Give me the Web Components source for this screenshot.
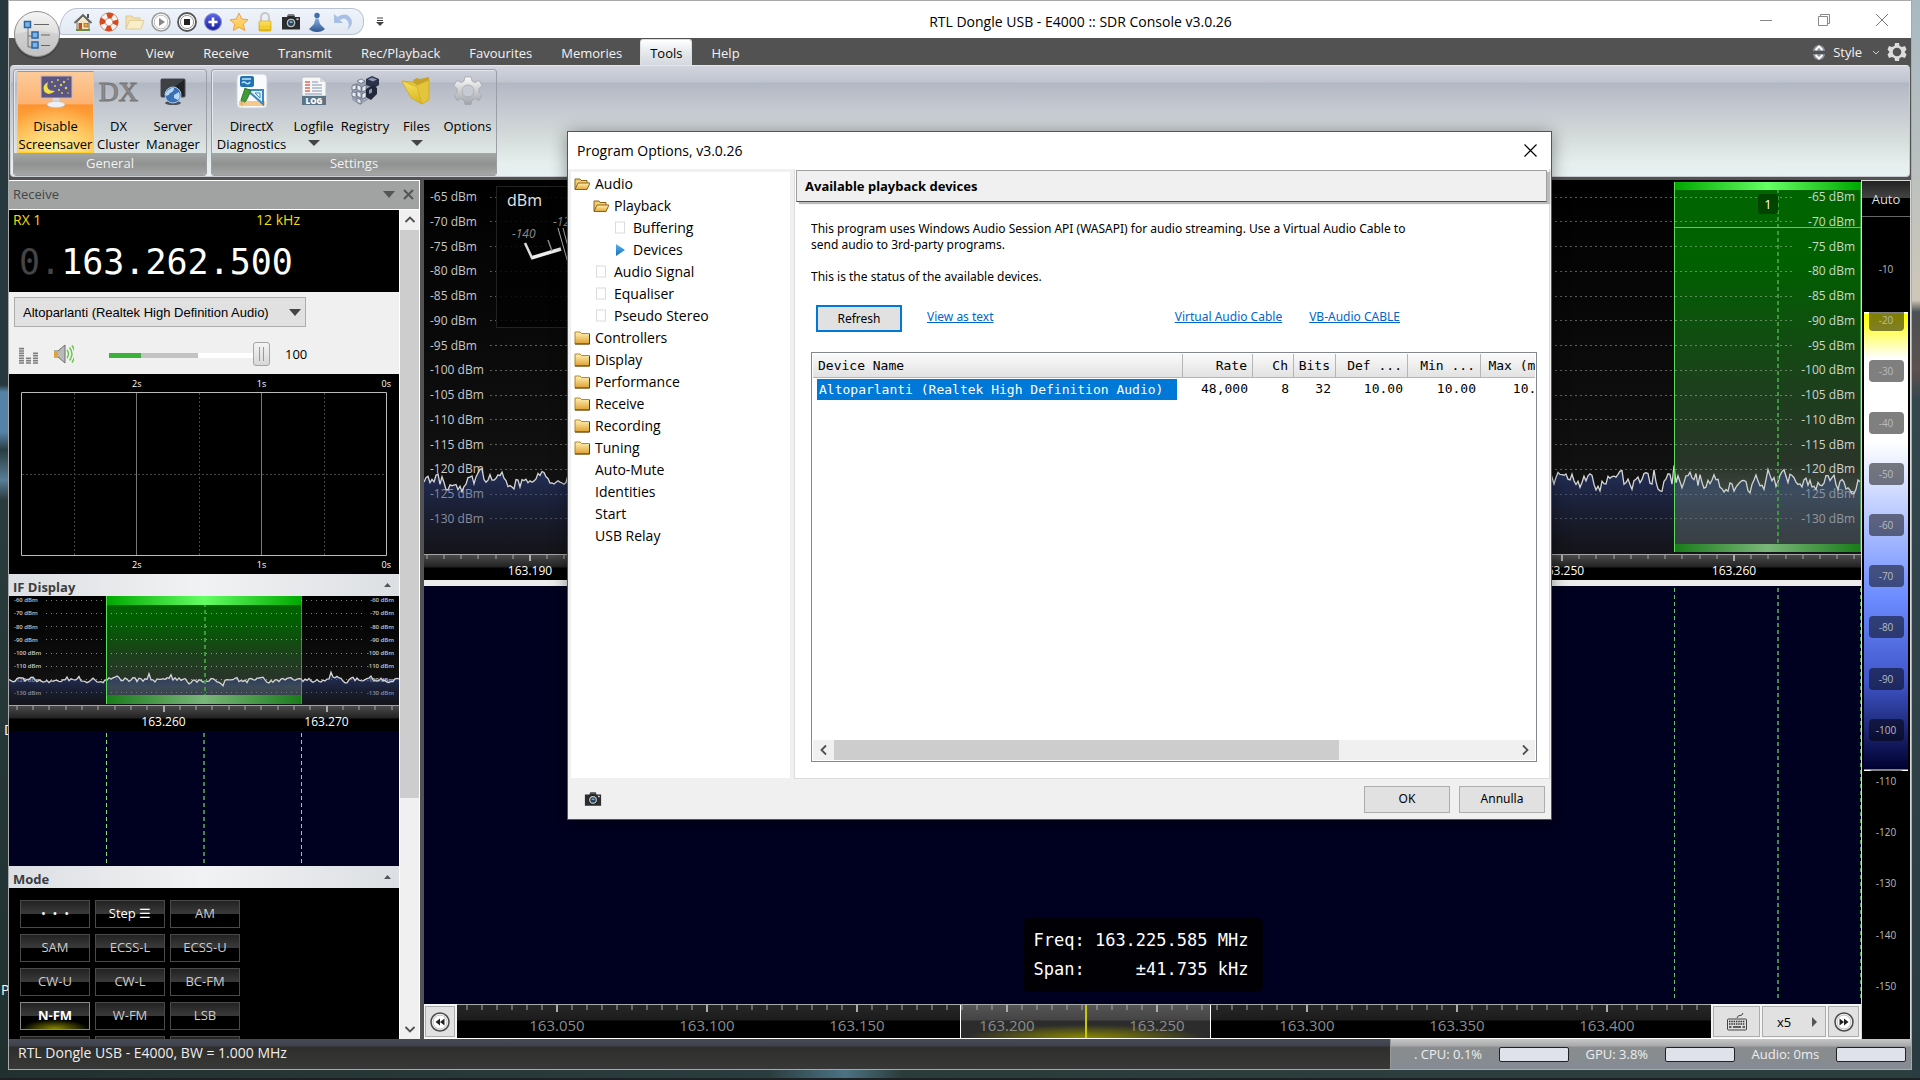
<!DOCTYPE html>
<html lang="en">
<head>
<meta charset="utf-8">
<title>RTL Dongle USB - E4000 :: SDR Console v3.0.26</title>
<style>
html,body{height:100%;margin:0}
body{font-family:"Open Sans","Noto Sans",sans-serif;font-size:13px;line-height:18px;color:#000;overflow:hidden;background:#1f2e30}
</style>
</head>
<body>
<sdr-desktop>
  <sdr-window>
    <title-bar slot="title">RTL Dongle USB - E4000 :: SDR Console v3.0.26</title-bar>
    <ribbon-tabs slot="tabs"></ribbon-tabs>
    <ribbon-body slot="ribbon">
      <ribbon-group caption="General">
        <ribbon-button icon="moon" active style="--w:77px">Disable<br>Screensaver</ribbon-button>
        <ribbon-button icon="dx" style="--w:49px">DX<br>Cluster</ribbon-button>
        <ribbon-button icon="server" style="--w:60px">Server<br>Manager</ribbon-button>
      </ribbon-group>
      <ribbon-group caption="Settings">
        <ribbon-button icon="directx" style="--w:73px">DirectX<br>Diagnostics</ribbon-button>
        <ribbon-button icon="log" menu style="--w:51px">Logfile</ribbon-button>
        <ribbon-button icon="registry" style="--w:52px">Registry</ribbon-button>
        <ribbon-button icon="files" menu style="--w:51px">Files</ribbon-button>
        <ribbon-button icon="gear" style="--w:51px">Options</ribbon-button>
      </ribbon-group>
    </ribbon-body>
    <receive-pane slot="left">
      <rx-frequency></rx-frequency>
      <audio-output></audio-output>
      <level-graph></level-graph>
      <pane-section heading="IF Display">
        <spectrum-plot small max="-60" step="-10" count="8" width="390" height="109" level="84" spread="3"></spectrum-plot>
        <freq-ruler small offset="73" pitch="163" labels="163.260,163.270"></freq-ruler>
        <water-fall small></water-fall>
      </pane-section>
      <pane-section heading="Mode"><mode-pad></mode-pad></pane-section>
    </receive-pane>
    <display-area slot="centre">
      <spectrum-plot slot="plot" max="-65" step="-5" count="14" width="1437" height="374" level="302" spread="9"><signal-meter></signal-meter></spectrum-plot>
      <freq-ruler slot="axis" offset="20" pitch="172" labels="163.190,,,,,,163.250,163.260"></freq-ruler>
      <water-fall slot="fall"></water-fall>
      <zoom-bar slot="zoom"></zoom-bar>
    </display-area>
    <colour-scale slot="right"></colour-scale>
    <status-bar slot="status">RTL Dongle USB - E4000, BW = 1.000 MHz</status-bar>
  </sdr-window>
  <options-dialog></options-dialog>
</sdr-desktop>

<script>
const define = (tag, css, html) => customElements.define(tag, class extends HTMLElement {
  connectedCallback() {
    if (this.shadowRoot) return;
    const t = document.createElement('template');
    t.innerHTML = `<style>*{box-sizing:border-box}:host{box-sizing:border-box}${css}</style>` + (typeof html === 'function' ? html(this) : html);
    this.attachShadow({ mode: 'open' }).append(t.content.cloneNode(true));
  }
});

/* ---------- icons ---------- */
const G = (id, a, b) => `<linearGradient id="${id}" x1="0" y1="0" x2="0" y2="1"><stop offset="0" stop-color="${a}"/><stop offset="1" stop-color="${b}"/></linearGradient>`;
const ICONS = {
  home: `<path d="M4 10v8h12v-8l-6-6z" fill="#f3e6c6" stroke="#777"/><path d="M1.500 11 10 3 18.500 11" fill="none" stroke="#666" stroke-width="1.800"/><path d="M14 2h2v4h-2z" fill="#555"/><rect x="5.500" y="11" width="3.500" height="7" fill="#b4532a"/><rect x="11" y="11.500" width="4" height="3.500" fill="#eda23b" stroke="#7a5b2a" stroke-width=".6"/><path d="M3 17h14v2H3z" fill="#6c8c3f"/>`,
  buoy: `<circle cx="10" cy="10" r="6.500" fill="none" stroke="#f4f4f4" stroke-width="5"/><circle cx="10" cy="10" r="6.500" fill="none" stroke="#d8491b" stroke-width="5.400" stroke-dasharray="5.600 4.610" stroke-dashoffset="2.800"/><circle cx="10" cy="10" r="9.200" fill="none" stroke="#b5542f" stroke-width=".6"/><circle cx="10" cy="10" r="3.800" fill="#fff" stroke="#b5542f" stroke-width=".6"/>`,
  openfolder: `<path d="M1 17V4h6l1.500 2H15v3" fill="#f2e1b0" stroke="#dbc78f"/><path d="M1 17 4.500 8.500H19L16 17z" fill="#f9edca" stroke="#dfcd9a"/>`,
  play: `<circle cx="10" cy="10" r="9" fill="#fff" stroke="#9b9b9b" stroke-width="1.600"/><circle cx="10" cy="10" r="6.800" fill="none" stroke="#bbb"/><path d="M8 6l6 4-6 4z" fill="#888"/>`,
  stop: `<circle cx="10" cy="10" r="9" fill="#fff" stroke="#555" stroke-width="1.800"/><circle cx="10" cy="10" r="6.600" fill="none" stroke="#999"/><rect x="7" y="7" width="6" height="6" fill="#222"/>`,
  plus: `${G('p','#5b68e6','#1a1f9e')}<circle cx="10" cy="10" r="8.500" fill="url(#p)" stroke="#8c93d8"/><path d="M10 5.500v9M5.500 10h9" stroke="#fff" stroke-width="2.600"/>`,
  star: `${G('s','#ffd9a0','#ffc933')}<path d="M10 1l2.700 6 6.300.7-4.700 4.300 1.400 6.500L10 15.200l-5.700 3.300L5.700 12 1 7.700 7.300 7z" fill="url(#s)" stroke="#eda04a" stroke-linejoin="round"/>`,
  lock: `${G('l','#ffe45e','#e5b400')}<path d="M6 9V5a4 4 0 0 1 8 0v4" fill="none" stroke="#c9c9c9" stroke-width="2.200"/><rect x="4" y="9" width="12" height="10" rx="1" fill="url(#l)" stroke="#d2a613" stroke-width=".7"/><path d="M5 13h10M5 16h10" stroke="#f6d95c"/>`,
  camera: `<path d="M7 2.500h6l1 2.500h5v12.500H1V5h5z" fill="#2c2d2f"/><path d="M7 2.500h6l.6 1.500H6.500z" fill="#777"/><circle cx="10" cy="11" r="5" fill="#b9bcbf" stroke="#111"/><circle cx="10" cy="11" r="3" fill="#28445c"/><path d="M8 10a3 3 0 0 1 4 .5L10 11z" fill="#9fc6e0"/><rect x="15.500" y="6.500" width="2" height="1.500" fill="#ddd"/>`,
  person: `${G('q','#86aede','#2c568f')}<circle cx="10" cy="3.500" r="2.700" fill="#3f6fae"/><path d="M8.500 6.500h3L13 12l5 5q-3 3-8 3t-8-3l5-5z" fill="url(#q)"/>`,
  undo: `<path d="M1 2v9h9L7 8.200q4-3.200 7 0 3.500 4 0 10 6.500-5 4.500-10.500C16 1.500 9 1 4.500 5z" fill="#a9c0e6"/>`,
  moon: `<rect x="3" y="3" width="31" height="22" fill="#5b5583" stroke="#c9b8c0"/><path d="M10 9q-3 9 7 9-7 6-11 0-2-6 4-9z" fill="#f1e04a"/><g fill="#d9cf52"><circle cx="14" cy="9" r="1"/><circle cx="20" cy="7" r="1"/><circle cx="26" cy="9" r="1.200"/><circle cx="30" cy="6" r=".8"/><circle cx="23" cy="12" r="1.200"/><circle cx="28" cy="15" r="1.300"/><circle cx="21" cy="17" r="1.100"/><circle cx="24" cy="20" r="1"/><circle cx="30" cy="20" r=".8"/><circle cx="17" cy="13" r="1"/></g><path d="M15 25h6l1 5h-8z" fill="#d6d9de"/><ellipse cx="18" cy="31.500" rx="9" ry="3.200" fill="#eef0f3" stroke="#b8bcc4" stroke-width=".7"/>`,
  server: `<rect x="6" y="6" width="24" height="18" rx="1" fill="#202225" stroke="#4a4d52"/><path d="M6 6h24L8 23H6z" fill="#3d4045"/><ellipse cx="18" cy="30" rx="8" ry="2" fill="#4b5056"/><circle cx="18" cy="22" r="8" fill="#3a70b5" stroke="#a8c7ea"/><path d="M12 18q5-4 7-3 0 4-4 5-2 4-5 2zM19 22l5-3q2 5-1 8l-4-2z" fill="#b9d7f2"/>`,
  directx: `<rect x="3" y="1" width="30" height="34" rx="4" fill="#f8fafb" stroke="#ccd2d8"/><path d="M5 28h26v5H5z" fill="#f6c88c"/><rect x="6" y="3" width="14" height="11" rx="2" fill="#2273b5"/><path d="M8 6h9M8 10q2-2 4 0t4-1" stroke="#bfe2f8" stroke-width="1.600" fill="none"/><path d="M13 17h16v14z" fill="#dceefb" stroke="#3b89c4" stroke-width="2"/><path d="M21 20h5v5z" fill="#fff" stroke="#3b89c4"/><path d="M11 15l6 3-5 10-4 4-1-5z" fill="#3e9b36" stroke="#25691f" stroke-width=".8"/><path d="M7 28l5 2-4 4z" fill="#f0c37a"/>`,
  log: `<path d="M6 4h18l6 5v14H6z" fill="#f7f7f8" stroke="#b9bcc2"/><path d="M24 4v5h5z" fill="#d5d8dd"/><g stroke-width="1.500"><path d="M9 9h5M9 12h5M9 15h5M9 18h5" stroke="#e06a55"/><path d="M16 9h6M16 12h10M16 15h10M16 18h10M9 21h17" stroke="#a9b5c8"/></g><rect x="6" y="23" width="24" height="9" fill="#5c7384"/><text x="18" y="30.500" text-anchor="middle" font-family="Open Sans" font-size="8" font-weight="800" fill="#fff">LOG</text>`,
  registry: `<path d="M5 12l12-5 5 4v15l-9 6-8-5z" fill="#9aa3b2"/><g fill="#e8ebf0" stroke="#576073" stroke-width=".7"><path d="M5 13l4-1.600v5L5 17zM10 11.500l4 2v5l-4-2zM5 19l4 .5v5L5 23zM10 18l4 2v5l-4-2zM10 25l4 2v4l-4-2zM15 14l4-2v5l-4 2zM15 21l4-2v5l-4 2z"/><path d="M10 8l4-2 4 2-4 2.500z"/></g><path d="M19 6l6-3 7 3v6l-5 3-8-3z" fill="#2b3348"/><path d="M19 16l7-4 4 3v6l-6 6-5-3z" fill="#1f2739"/><path d="M21 6.500l4-2 5 2-4 2zM22 17l3-1.500v4L22 21z" fill="#8b97b5"/>`,
  files: `${G('f','#f6e25c','#d9b21c')}<path d="M14 7l4-2 3 1 9-2v22l-6 4z" fill="#c6a22a"/><path d="M3 8l11 1 4 3 12-5v20l-7 4-11-7z" fill="#e2c53a" stroke="#c9a426" stroke-width=".7"/><path d="M3 8l15 6 5 17-11-6z" fill="url(#f)" stroke="#c9a426" stroke-width=".5"/>`,
  gear: `${G('g','#fafafa','#9fa3a8')}<path d="M15 4h6l1 4 3 1.500 4-2 3 5-3 3v4l3 3-3 5-4-2-3 2-1 4h-6l-1-4-3-2-4 2-3-5 3-3v-4l-3-3 3-5 4 2L14 8z" fill="url(#g)" stroke="#a3a7ac" stroke-width=".8" stroke-linejoin="round"/><circle cx="18" cy="18" r="6" fill="#c6cad2" stroke="#a3a7ac" stroke-width=".8"/>`,
  folder: `${G('d','#fff2b5','#dfa032')}<path d="M1 14V2h5l1.500 1.500H15.500V14z" fill="url(#d)" stroke="#a97b22" stroke-width=".9"/><path d="M1 14h14.500V4" fill="none" stroke="#5b3f0c"/>`,
  folderopen: `${G('d','#fff2b5','#e0a63a')}<path d="M1 13V3h5l1 1.500h6V7" fill="#f3cf73" stroke="#8a6316"/><path d="M1 13.500 4 7h12l-3 6.500z" fill="url(#d)" stroke="#8a6316"/>`,
  page: `<rect x="3.500" y="2" width="9" height="11" fill="#fff" stroke="#dcdcdc"/>`,
  arrow: `${G('a','#5db4f0','#0f6fc0')}<path d="M4 2l9 6-9 6z" fill="url(#a)"/>`,
  none: ``,
  equal: `<g stroke="#7e7e7e" stroke-width="1.600"><path d="M0 19h5M0 16.600h5M0 14.200h5M0 11.800h5M0 9.400h5M0 7h5M0 4.600h5M7 19h5M7 16.600h5M7 14.200h5M14 19h5M14 16.600h5M14 14.200h5M14 11.800h5M14 9.400h5"/></g>`,
  speaker: `<path d="M0 7h4l7-6v18l-7-6H0z" fill="#b9b9b9" stroke="#6e6e6e"/><path d="M0 7h4v6H0z" fill="#e1a33a"/><path d="M13 6q3 4 0 8M15.500 3.500q5 6.500 0 13M18 1.500q6 8.500 0 17" fill="none" stroke="#62c944" stroke-width="1.400"/>`,
  keyboard: `<path d="M10 6q1-3 3-2.500T16 1" fill="none" stroke="#444"/><rect x="0.500" y="7" width="19" height="11" rx="1" fill="#ddd" stroke="#444"/><path d="M2 9.500h16M2 12h16" stroke="#333" stroke-width="1.400" stroke-dasharray="1.500 .8"/><path d="M2 15h2.500M6 15h8M15.500 15H18" stroke="#333" stroke-width="1.600"/>`,
  ffwd: `<circle cx="10" cy="10" r="9" fill="#fff" stroke="#4a4a4a" stroke-width="1.500"/><circle cx="10" cy="10" r="7" fill="none" stroke="#bbb"/><path d="M5.500 6.500l4.500 3.500-4.500 3.500zM10 6.500l4.500 3.500-4.500 3.500z" fill="#222"/>`,
  rewind: `<circle cx="10" cy="10" r="9" fill="#fff" stroke="#4a4a4a" stroke-width="1.500"/><circle cx="10" cy="10" r="7" fill="none" stroke="#bbb"/><path d="M14.500 6.500 10 10l4.500 3.500zM10 6.500 5.500 10l4.500 3.500z" fill="#222"/>`,
  orb: `<defs>${G('o','#f6f6f6','#c4c4c4')}</defs><circle cx="24" cy="25" r="23" fill="#0003"/><circle cx="24" cy="23" r="22.500" fill="url(#o)" stroke="#8d8d8d"/><path d="M2.500 23a21.500 21.500 0 0 0 43 0Q24 17 2.500 23z" fill="#bdbdbd66"/><path d="M15 17v19h6M15 25h6" fill="none" stroke="#777"/><g fill="#7db4e6" stroke="#2a66a5" stroke-width="1.500"><rect x="11.500" y="10.500" width="6" height="6"/><rect x="19" y="21" width="6" height="6"/><rect x="19" y="31" width="6" height="6"/></g><path d="M21 13.500h15M28 24h9M28 34.500h9" stroke="#666"/>`,
  updown: `<path d="M1 9a6 6 0 0 1 12 0z" fill="#8b909b"/><path d="M1 12a6 6 0 0 0 12 0z" fill="#8b909b"/><path d="M3.500 8 7 4.500 10.500 8M3.500 13 7 16.500 10.500 13" fill="none" stroke="#fff" stroke-width="2"/>`,
  cog: `<path d="M8 1h4l.5 3 2.500 1L18 4l1.500 3.500L17.500 10l2 2.500L18 16l-3-1-2.500 1-.5 3H8l-.5-3L5 15l-3 1L.5 12.500l2-2.500-2-2.500L2 4l3 1 2.500-1z" fill="#ddd"/><circle cx="10" cy="10" r="4.300" fill="#525252"/>`
};
const BOX = { moon: 36, server: 36, directx: 36, log: 36, registry: 36, files: 36, gear: 36, folder: 16, folderopen: 16, page: 16, arrow: 16, none: 16, orb: 48 };
define('app-icon', `:host{display:block;width:var(--size,20px);height:var(--size,20px);flex:none}svg{display:block;width:100%;height:100%}`,
  el => { const n = el.getAttribute('name'), b = BOX[n] || 20; return `<svg viewBox="0 0 ${b} ${b}" aria-hidden="true">${ICONS[n]}</svg>`; });

/* ---------- desktop and window frame ---------- */
define('sdr-desktop', `
:host{display:grid;position:relative;height:100vh;padding:0 8px 10px;overflow:hidden;
 background:
 linear-gradient(#1c2022,#1c2022) 0 100%/100% 2px no-repeat,
 linear-gradient(#27393f 0,#27393f 385px,#5583a8 392px,#5583a8 432px,#2a3c40 450px,#587d97 480px,#2a3b3d 500px,#20302f 100%) 0 0/9px 100% no-repeat,
 linear-gradient(#a9b9c2 0,#b9c0c0 160px,#cfc7b8 300px,#4c5054 312px,#5d5050 370px,#33474e 400px,#2a3c42 100%) 100% 0/9px 100% no-repeat,
 linear-gradient(90deg,#22312f,#2a3d3e 40%,#4c7284 44%,#2a3c3a 47%,#2c3f3f)}
.bit{position:absolute;color:#fff;font-size:14px}
`, `<span class="bit" style="left:4px;top:721px">D</span><span class="bit" style="left:1px;top:981px">P</span><slot></slot>`);

define('sdr-window', `
:host{display:grid;position:relative;grid-template-rows:37px 27px 112px 3px minmax(0,1fr) 30px;border:1px solid #a9a9a9;background:#525252;min-width:0;min-height:0}
.main{display:grid;grid-row:5;grid-template-columns:411px minmax(0,1fr) 50px;column-gap:0;min-height:0}
.centre{padding-left:4px;display:grid;min-width:0;min-height:0}
.left,.right{display:grid;min-height:0}
.status{grid-row:6;display:grid}
`, `<slot name="title"></slot><slot name="tabs"></slot><slot name="ribbon"></slot>
<div class="main"><div class="left"><slot name="left"></slot></div><div class="centre"><slot name="centre"></slot></div><div class="right"><slot name="right"></slot></div></div>
<div class="status"><slot name="status"></slot></div>`);

define('title-bar', `
:host{display:grid;grid-template-columns:auto 1fr auto;align-items:center;background:#fff;color:#000;font-size:14px}
.qat{display:flex;align-items:center;gap:12px;padding-top:4px}
.tray{display:flex;align-items:center;gap:6px;height:27px;margin-left:50px;padding:0 10px 0 13px;border:1px solid #b9c3d0;border-radius:20px 14px 14px 4px/27px 14px 14px 4px;background:linear-gradient(#eff4fb,#e3e9f2)}
button{border:0;background:none;padding:0;font:inherit;display:grid;place-items:center}
.orb{position:absolute;left:4px;top:10px;--size:48px;z-index:2}
.t{text-align:center;padding:5px 0 0 40px}
.win{display:flex;justify-content:flex-end}
.win button{width:58px;height:36px}
`, `<div class="qat"><button class="orb" aria-label="Application menu"><app-icon name="orb"></app-icon></button>
<div class="tray">${['home','buoy','openfolder','play','stop','plus','star','lock','camera','person','undo'].map(n => `<button aria-label="${n}"><app-icon name="${n}"></app-icon></button>`).join('')}</div>
<button aria-label="Customise"><svg width="8" height="9"><path d="M1 1h6M1 3.500h6" stroke="#444"/><path d="M0 5h8L4 9z" fill="#444"/></svg></button></div>
<span class="t"><slot></slot></span>
<div class="win"><button aria-label="Minimise"><svg width="12" height="12"><path d="M0 6.500h12" stroke="#888"/></svg></button><button aria-label="Restore"><svg width="12" height="12"><path d="M.5 2.500h9v9h-9zM2.500 2V.5h9v9H10" fill="none" stroke="#888"/></svg></button><button aria-label="Close"><svg width="12" height="12"><path d="M0 0l12 12M12 0 0 12" stroke="#777"/></svg></button></div>`);

define('ribbon-tabs', `
:host{display:flex;justify-content:space-between;align-items:stretch;background:#525252;color:#f2f2f2;padding-left:56px}
nav,.right{display:flex;align-items:stretch}
button{border:1px solid transparent;border-bottom:0;background:none;color:inherit;font:inherit;padding:4px 13px 3px 14px;border-radius:3px 3px 0 0}
button[aria-selected=true]{background:linear-gradient(#fff,#e4e9ec 50%,#d4d8df);color:#000;border-color:#ddd;margin:1px 4px 0 4px;padding:3px 9px 3px}
.right{align-items:center;gap:5px;padding-right:3px}
.right button{padding:0;display:flex;align-items:center;gap:10px}
`, `<nav role="tablist">${['Home','View','Receive','Transmit','Rec/Playback','Favourites','Memories','Tools','Help'].map(t => `<button role="tab" aria-selected="${t === 'Tools'}">${t}</button>`).join('')}</nav>
<div class="right"><button aria-label="Collapse"><svg width="14" height="20" viewBox="0 0 14 20">${ICONS.updown}</svg></button><button>Style<svg width="8" height="5"><path d="M1 1l3 3 3-3" fill="none" stroke="#ccc"/></svg></button><button aria-label="Settings"><app-icon name="cog"></app-icon></button></div>`);

define('ribbon-body', `
:host{display:flex;gap:4px;margin:0 1px;padding:3px 2px 0;border:1px solid #c9ccd2;border-top-color:#e4e6ea;border-radius:4px;
background:linear-gradient(#d2d5de 0,#c0c4cf 16px,#b2b8c4 17px,#c4c8d0 42px,#d3d9d9 68px,#e6eeee 98px,#e8f1f1)}`, `<slot></slot>`);
define('ribbon-group', `
:host{display:flex;flex-direction:column;height:107px;border:1px solid #9b9ea4;border-radius:3px;overflow:hidden;box-shadow:inset 1px 1px 0 #e3e6ec}
.row{display:flex;flex:1;min-height:0;padding:1px 3px 0 3px}
footer{height:22px;line-height:21px;text-align:center;color:#f2f2f2;background:linear-gradient(#a3a7a6,#8f9291 50%,#a5a8a8)}
`, el => `<div class="row"><slot></slot></div><footer>${el.getAttribute('caption')}</footer>`);
define('ribbon-button', `
:host{display:block;width:var(--w)}
button{width:100%;height:82px;border:1px solid transparent;background:none;padding:1px 0 0;font:inherit;line-height:18px;color:#000;display:flex;flex-direction:column;align-items:center;overflow:hidden}
app-icon,.dx{--size:36px;margin-bottom:8px;flex:none}
.dx{height:36px;line-height:39px;font-family:"Liberation Serif",serif;font-weight:400;font-size:27px;color:#8f8f8f;-webkit-text-stroke:1px #777}
span{white-space:nowrap}
:host([active]) button{border-color:#d0902f #ffcf2e #ffcf2e;background:radial-gradient(ellipse 70% 60% at 50% 100%,#fff09a,#fff09a00),linear-gradient(#fccb9a 0,#fdb271 40%,#fd9330 41%,#ffc650 100%)}
i{width:0;height:0;border:6px solid transparent;border-top-color:#444;border-bottom:0;margin-top:5px}
`, el => `<button>${el.getAttribute('icon') === 'dx' ? '<b class="dx" aria-hidden="true">DX</b>' : `<app-icon name="${el.getAttribute('icon')}"></app-icon>`}<span><slot></slot></span>${el.hasAttribute('menu') ? '<i></i>' : ''}</button>`);

/* ---------- receive pane ---------- */
define('scroll-rail', `
:host{display:flex;flex-direction:column;background:#f0f0f0}
:host([across]){flex-direction:row}
button{border:0;padding:0;background:none;width:100%;height:20px;display:grid;place-items:center;flex:none}
:host([across]) button{width:21px;height:100%}
.track{flex:1;display:flex;flex-direction:inherit}
.thumb{background:#cdcdcd;flex:0 0 var(--thumb)}
`, el => { const a = el.hasAttribute('across'); return `<button aria-label="Back"><svg width="12" height="12"><path d="${a ? 'M8 1.500 3.500 6 8 10.500' : 'M1.500 8 6 3.500 10.500 8'}" fill="none" stroke="#505050" stroke-width="1.800"/></svg></button><div class="track"><div class="thumb"></div></div><button aria-label="Forward"><svg width="12" height="12"><path d="${a ? 'M4 1.500 8.500 6 4 10.500' : 'M1.500 4 6 8.500 10.500 4'}" fill="none" stroke="#505050" stroke-width="1.800"/></svg></button>`; });

define('receive-pane', `
:host{display:grid;grid-template-rows:30px minmax(0,1fr);min-height:0}
header{display:flex;align-items:center;justify-content:space-between;padding:0 5px 2px 4px;background:#a0a3a2;border:1px solid #fff;border-width:1px 1px 1px 0;color:#454545}
.ctl{display:flex;gap:8px;align-items:center}
.ctl button{border:0;background:none;padding:0;display:grid}
.body{display:grid;grid-template-columns:390px 1fr;min-height:0}
.stack{overflow:hidden;background:#000}
scroll-rail{border:1px solid #fff;border-width:0 1px;--thumb:72%}
`, `<header>Receive<span class="ctl"><button aria-label="Menu"><svg width="12" height="7"><path d="M0 0h12L6 7z" fill="#555"/></svg></button><button aria-label="Close"><svg width="11" height="11"><path d="M1 1l9 9M10 1l-9 9" stroke="#555" stroke-width="2"/></svg></button></span></header>
<div class="body"><div class="stack"><slot></slot></div><scroll-rail></scroll-rail></div>`);

define('rx-frequency', `
:host{display:block;height:82px;background:#000;color:#f5dc00;font-size:14px}
.top{display:flex;justify-content:space-between;padding:1px 99px 0 4px}
.f{font:35px/48px "DejaVu Sans Mono",monospace;color:#fff;padding:9px 0 0 10px;white-space:nowrap}
.f span{color:#444}
`, `<div class="top"><span>RX 1</span><span>12 kHz</span></div><div class="f"><span>0.</span>163.262.500</div>`);

define('audio-output', `
:host{display:block;height:82px;background:#f0f0f0;padding:5px}
select{appearance:none;width:292px;height:30px;border:1px solid #adadad;border-radius:0;padding:0 8px;color:#000;font:13px "Liberation Sans",sans-serif;background:#e1e1e1}
.sel{display:flex;align-items:center;position:relative;width:292px}
.sel svg{position:absolute;right:5px;pointer-events:none}
.vol{display:flex;align-items:center;padding:7px 0 0 5px;height:46px}
.vol app-icon+app-icon{margin-left:15px}
input{appearance:none;width:161px;height:26px;margin:0 15px 0 35px;background:linear-gradient(90deg,#3bb03b 0,#3bb03b 32px,#c3c3c3 32px,#c3c3c3 89px,#fff 89px) 0 12px/100% 5px no-repeat;}
input::-webkit-slider-thumb{appearance:none;width:17px;height:24px;border:1px solid #a5a5a5;border-radius:3px;background:linear-gradient(#999,#999) 5px 50%/1px 14px no-repeat,linear-gradient(#999,#999) 9px 50%/1px 14px no-repeat,linear-gradient(#f4f4f4,#d8d8d8)}
`, `<div class="sel"><select aria-label="Output device"><option>Altoparlanti (Realtek High Definition Audio)</option></select><svg width="12" height="7"><path d="M0 0h12L6 7z" fill="#444"/></svg></div>
<div class="vol"><app-icon name="equal"></app-icon><app-icon name="speaker"></app-icon><input id="v" type="range" min="0" max="100" value="100" aria-label="Volume"><label for="v">100</label></div>`);

define('level-graph', `
:host{display:flex;flex-direction:column;height:200px;background:#000;color:#fff;font-size:9px;line-height:18px}
.t{display:flex;justify-content:space-between;padding:0 8px 0 123px;height:18px}
.t:first-of-type{padding-top:1px}
svg{flex:1;margin:0 12px;width:auto;height:164px;min-height:0}
`, `<div class="t"><span>2s</span><span>1s</span><span>0s</span></div>
<svg viewBox="0 0 366 164" preserveAspectRatio="none" fill="none"><path d="M53.500 1v162M178.500 1v162M303.500 1v162M1 82.500h364" stroke="#444" stroke-dasharray="2 2"/><path d="M115.500 1v162M240.500 1v162" stroke="#777"/><path d="M.5.5h365v163H.5z" stroke="#bbb"/></svg>
<div class="t"><span>2s</span><span>1s</span><span>0s</span></div>`);

define('pane-section', `
:host{display:block}
header{display:flex;justify-content:space-between;align-items:center;height:22px;padding:4px 8px 0 4px;font-weight:700;color:#3a3d42;background:linear-gradient(90deg,#dcdfe3,#f1f2f3 50%,#dcdfe3)}
button{border:0;background:none;padding:0 0 4px}
svg{display:block}
`, el => `<header>${el.getAttribute('heading')}<button aria-label="Collapse"><svg width="7" height="4"><path d="M0 4h7L3.500 0z" fill="#555"/></svg></button></header><slot></slot>`);

define('mode-pad', `
:host{display:grid;grid-template-columns:repeat(3,70px);grid-auto-rows:28px;gap:6px 5px;padding:12px 11px;background:#000}
button{border:1px solid #4a4a4a;padding:0 0 2px;background:linear-gradient(#222 0,#3a3a3a 48%,#000 50%);color:#ccc;font:13px/20px "Open Sans",sans-serif}
.w{color:#fff}
.on{color:#fff;font-weight:700;border-color:#888;background:radial-gradient(ellipse 50% 36% at 50% 100%,#8a8a00,#8a8a0000),linear-gradient(#222 0,#3a3a3a 48%,#000 50%)}
`, `<button class="w">•&nbsp; •&nbsp; •</button><button class="w">Step ☰</button>${['AM','SAM','ECSS-L','ECSS-U','CW-U','CW-L','BC-FM','N-FM','W-FM','LSB'].map(t => `<button${t === 'N-FM' ? ' class="on"' : ''}>${t}</button>`).join('')}<button aria-label="USB"></button><button aria-label="Wide"></button><button aria-label="Narrow"></button>`);

/* ---------- spectrum ---------- */
const noise = (w, level, spread) => {
  let seed = w * 7 + 3, v = 0; const pts = [];
  const rnd = () => ((seed = (seed * 1103515245 + 12345) % 2147483648) / 2147483648);
  for (let x = 0; x <= w; x += 2) {
    v = v * 0.62 + (rnd() - 0.5) * spread * 1.6;
    const spike = rnd() > 0.94 ? (rnd() - 0.62) * spread * 3 : 0;
    pts.push(`${x} ${(level + v + spike).toFixed(1)}`);
  }
  return pts.join('L');
};
define('spectrum-plot', `
:host{display:grid;position:relative;overflow:hidden;min-height:0;background:linear-gradient(#000,#161616);--bw:187px;--mark:102px}
:host([small]){height:109px;--bw:196px;--mark:97px}
:host>*{grid-area:1/1}
.rows{display:flex;flex-direction:column;justify-content:space-between;padding:7px 6px 25px;font-size:12px;line-height:20px;color:#ffffffc8;min-height:0}
.row{display:flex;align-items:center}
.row span{width:60px}.row span:last-child{width:63px;text-align:right}
.row i{flex:1;height:1px;background:repeating-linear-gradient(90deg,#ffffff58 0 2px,transparent 2px 5px)}
:host([small]) .rows{padding:0 5px 8px;font-size:6px;line-height:8px;font-weight:600}
:host([small]) .row span{width:32px}
:host([small]) .row i{background:repeating-linear-gradient(90deg,#ffffff80 0 1px,transparent 1px 5px)}
svg{width:100%;height:100%;min-height:0;z-index:1}
.band{justify-self:end;width:var(--bw);margin:2px 0;background:linear-gradient(#006600,#006000 22%,#1c401c 55%,#2a332a 78%,#303038)}
.cap{justify-self:end;width:var(--bw);margin:2px 0;z-index:2;display:flex;flex-direction:column;justify-content:space-between;border-left:1px solid #5fdc5f;border-right:1px solid #5fdc5f80;
 background:repeating-linear-gradient(#3c9a3c 0 4px,transparent 4px 7px) var(--mark) 0/2px 100% no-repeat,linear-gradient(transparent 76%,#9dbd9d28 84%)}
:host([small]) .band,:host([small]) .cap{justify-self:start;margin:0 0 1px 97px}
.cap b{height:8px;background:linear-gradient(90deg,#00a800,#64ff64 50%,#00a800)}
:host([small]) .cap b{height:9px}
.cap b+b{background:linear-gradient(90deg,#1a7c1a,#7ab67a 50%,#1a7c1a)}
.squelch{position:absolute;right:0;width:var(--bw);top:47px;height:1px;background:#42e042;z-index:2}
.id{position:absolute;right:83px;top:14px;width:20px;height:20px;border-radius:3px;background:#004400;color:#fff;text-align:center;line-height:20px;z-index:3}
slot{display:block;z-index:3}
`, el => {
  const n = k => +el.getAttribute(k), w = n('width'), h = n('height'), small = el.hasAttribute('small');
  const line = noise(w, n('level'), n('spread'));
  const rows = Array.from({ length: n('count') }, (_, i) => { const t = `${n('max') + i * n('step')} dBm`; return `<div class="row"><span>${t}</span><i></i><span>${t}</span></div>`; }).join('');
  return `<div class="band"></div><div class="rows">${rows}</div>
<svg viewBox="0 0 ${w} ${h}" preserveAspectRatio="none"><defs><linearGradient id="n" x1="0" y1="0" x2="0" y2="1"><stop offset="0" stop-color="#3a55b0" stop-opacity=".55"/><stop offset="1" stop-color="#101020" stop-opacity=".3"/></linearGradient></defs><path d="M0 ${h}L${line}L${w} ${h}z" fill="url(#n)"/><path d="M${line}" fill="none" stroke="#d6d6d6" stroke-width="1.300"/></svg>
<div class="cap"><b></b><b></b></div>${small ? '' : '<div class="squelch"></div><span class="id">1</span><slot></slot>'}`;
});

define('signal-meter', `
:host{position:absolute;left:72px;top:6px;width:300px;height:142px;border:1px solid #222;background:#020202d8;color:#e4e4e4;font-size:16px;padding:4px 10px}
svg{position:absolute;left:0;top:30px}
text{font:italic 12px "Open Sans",sans-serif;fill:#8a8a8a}
`, `dBm<svg width="120" height="60" fill="none"><text x="15" y="21">-140</text><text x="56" y="9">-120</text><path d="M34 41l30-9" stroke="#eee" stroke-width="3.500"/><path d="M28 26l7 15" stroke="#ddd" stroke-width="2.500"/><path d="M51 23l4 11" stroke="#888" stroke-width="1.500"/><path d="M61 11l12 42M66 11l8 30" stroke="#bbb"/></svg>`);

const ruler = (el, minor, major) => {
  const off = +el.getAttribute('offset'), p = +el.getAttribute('pitch');
  let d = '', m = '';
  for (let i = -10; i < 120; i++) { const x = Math.round(off + p / 2 + i * p / 10); if (x < 0) continue; if (i % 10 === 0) m += `M${x} 0v${major}`; else d += `M${x} 0v${minor}`; }
  return `<svg width="100%" height="${major}"><path d="${d}" stroke="#aaa"/><path d="${m}" stroke="#aaa" stroke-width="2"/></svg><div class="l">${el.getAttribute('labels').split(',').map(t => `<span>${t}</span>`).join('')}</div>`;
};
define('freq-ruler', `
:host{display:block;position:relative;overflow:hidden;height:26px;border-top:1px solid #a5a5a5;color:#fff;font-size:12px;line-height:18px;background:linear-gradient(#4a4a4a,#222 12px,#000 13px)}
svg{position:absolute;left:0;top:0}
.l{display:flex;position:relative;padding-left:var(--o);padding-top:7px}
.l span{flex:0 0 var(--p);text-align:center}
`, el => `<style>:host{--o:${el.getAttribute('offset')}px;--p:${el.getAttribute('pitch')}px}</style>` + ruler(el, 4, 6));

define('water-fall', `
:host{display:grid;position:relative;min-height:0;background:#000020}
:host([small]){height:135px}
.lines{justify-self:end;width:187px;margin:2px 0 4px;
background:repeating-linear-gradient(#5fc46f 0 4px,#0000 4px 7px) 0 0/1px 100% no-repeat,repeating-linear-gradient(#3f8a4a 0 4px,#0000 4px 7px) 103px 0/2px 100% no-repeat,repeating-linear-gradient(#4faa5f 0 4px,#0000 4px 7px) 100% 0/1px 100% no-repeat}
:host([small]) .lines{justify-self:start;width:196px;margin:2px 0 2px 97px;
background:repeating-linear-gradient(#7fe07f 0 4px,#0000 4px 7px) 0 0/1px 100% no-repeat,repeating-linear-gradient(#3f8a4a 0 4px,#0000 4px 7px) 97px 0/2px 100% no-repeat,repeating-linear-gradient(#7fe07f 0 4px,#0000 4px 7px) 100% 0/1px 100% no-repeat}
pre{position:absolute;left:50%;bottom:12px;transform:translateX(-50%);margin:0;padding:8px 11px;width:240px;border-radius:6px;background:#000005;color:#fff;font:17px/29px "DejaVu Sans Mono",monospace}
`, el => `<div class="lines"></div>${el.hasAttribute('small') ? '' : '<pre>Freq: 163.225.585 MHz\nSpan:     ±41.735 kHz</pre>'}`);

define('display-area', `
:host{display:grid;grid-template-rows:minmax(0,374fr) 26px 6px minmax(0,418fr) 35px;min-height:0;min-width:0}
.split{background:#ececec}
`, `<slot name="plot"></slot><slot name="axis"></slot><div class="split"></div><slot name="fall"></slot><slot name="zoom"></slot>`);

define('zoom-ruler', `
:host{display:block;position:relative;flex:1;min-width:0;overflow:hidden;border-top:1px solid #aaa;color:#8c8c8c;font-size:15px;line-height:22px;background:linear-gradient(#262626,#1c1c1c 15px,#000 16px)}
svg{position:absolute;left:0;top:0}
.l{display:flex;position:relative;padding:9px 0 0 25px}
.l span{flex:0 0 150px;text-align:center}
.view{position:absolute;left:503px;width:251px;top:0;bottom:0;border:1px solid #fff;border-width:0 1px;background:linear-gradient(#c8c800,#c8c800) 50% 0/2px 100% no-repeat,radial-gradient(ellipse 48% 40% at 50% 100%,#8a8a00,#8a8a0000),linear-gradient(#555,#444 15px,#2c2c2c 16px)}
`, el => `<div class="view"></div>` + ruler(el, 5, 7));

define('zoom-bar', `
:host{display:flex;background:#f4f4f4;border-bottom:1px solid #fff;min-width:0}
button{border:1px solid #adadad;background:#e1e1e1;margin:2px 0 1px 2px;padding:0;display:flex;align-items:center;justify-content:center;font:inherit}
.r{width:30px;margin-right:2px;margin-left:1px}.k{width:47px}.x{width:64px;justify-content:space-between;padding:0 8px 0 14px}.f{width:31px;margin-right:2px}
`, `<button class="r" aria-label="Back"><app-icon name="rewind"></app-icon></button>
<zoom-ruler offset="25" pitch="150" labels="163.050,163.100,163.150,163.200,163.250,163.300,163.350,163.400"></zoom-ruler>
<button class="k" aria-label="Keyboard"><app-icon name="keyboard"></app-icon></button><button class="x">x5<svg width="5" height="10"><path d="M0 0v10l5-5z" fill="#555"/></svg></button><button class="f" aria-label="Forward"><app-icon name="ffwd"></app-icon></button>`);

define('colour-scale', `
:host{display:flex;flex-direction:column;background:#000;border:1px solid #d8d8d8;border-width:1px 1px 0;min-height:0}
button{height:36px;border:1px solid #666;border-width:0 0 1px;padding:0;background:linear-gradient(#222,#444 49%,#000 50%);color:#ddd;font:inherit;line-height:34px}
.s{flex:1;margin:0 2px;display:flex;flex-direction:column;justify-content:space-between;align-items:center;padding:41px 0 42px;font-size:10px;line-height:22px;color:#bbb;
background:linear-gradient(#fff,#fff 1px,#ff0 2px,#ffff30 12px,#fff 46px,#fff 130px,#6c8cff 285px,#3f55c8 370px,#000030 457px,#fff 458px) 0 95px/100% 459px no-repeat}
.s span{width:35px;text-align:center;border-radius:4px;background:#00000080}
`, `<button>Auto</button><div class="s">${Array.from({ length: 15 }, (_, i) => `<span>-${(i + 1) * 10}</span>`).join('')}</div>`);

define('status-bar', `
:host{display:flex;justify-content:space-between;align-items:stretch;color:#eee;background:linear-gradient(#474b58,#3e414a 7px,#2e2e2c 8px,#383838)}
.m{padding:4px 0 0 9px;font-size:14px;line-height:20px}
.r{display:flex;align-items:center;border-left:1px solid #999;padding:0 5px 0 23px;width:521px;justify-content:space-between;background:linear-gradient(#c6c6c6,#a8a9aa 7px,#8a8d8e 8px,#848b93)}
.g{width:70px;height:15px;border:1px solid #222;border-radius:2px;background:#dfe1eb}
`, `<span class="m"><slot></slot></span><div class="r"><span>. CPU: 0.1%</span><div class="g"></div><span>GPU: 3.8%</span><div class="g"></div><span>Audio: 0ms</span><div class="g"></div></div>`);

/* ---------- options dialog ---------- */
define('tree-item', `
:host{display:flex;align-items:center;height:22px;font-size:14px;gap:5px;padding-left:calc(3px + 19px*var(--depth,0));font-family:"Open Sans",sans-serif}
app-icon{--size:16px}
`, el => `<app-icon name="${el.getAttribute('icon') || 'none'}"></app-icon><span><slot></slot></span>`);

const TREE = [['Audio',0,'folderopen'],['Playback',1,'folderopen'],['Buffering',2,'page'],['Devices',2,'arrow'],['Audio Signal',1,'page'],['Equaliser',1,'page'],['Pseudo Stereo',1,'page'],['Controllers',0,'folder'],['Display',0,'folder'],['Performance',0,'folder'],['Receive',0,'folder'],['Recording',0,'folder'],['Tuning',0,'folder'],['Auto-Mute',0],['Identities',0],['Start',0],['USB Relay',0]];
define('options-tree', `:host{display:block;background:#fff;padding-top:1px}`,
  TREE.map(([t, d, i]) => `<tree-item icon="${i || 'none'}" style="--depth:${d}">${t}</tree-item>`).join(''));

define('device-table', `
:host{display:flex;flex-direction:column;border:1px solid #828790;padding:1px;background:#fff;font:13px/20px "DejaVu Sans Mono",monospace;overflow:hidden;min-width:0}
.v{flex:1;overflow:hidden}
table{border-collapse:separate;border-spacing:0;table-layout:fixed;width:744px;white-space:nowrap}
th,td{font-weight:400;text-align:right;padding:0 5px 0 0;height:22px}
th{height:24px;background:linear-gradient(#fafafa,#e2e2e2);border-right:1px solid #b5b5b5;border-bottom:1px solid #b5b5b5}
th:first-child{text-align:left;padding-left:5px}
td:first-child{text-align:left;padding:0 6px 0 4px}
td span{display:block;background:#0078d7;color:#fff;padding-left:2px;line-height:21px}
scroll-rail{height:20px;--thumb:505px}
`, `<div class="v"><table><colgroup><col style="width:370px"><col style="width:70px"><col style="width:41px"><col style="width:42px"><col style="width:72px"><col style="width:73px"><col style="width:76px"></colgroup>
<thead><tr>${['Device Name','Rate','Ch','Bits','Def ...','Min ...','Max (ms)'].map(t => `<th scope="col">${t}</th>`).join('')}</tr></thead>
<tbody><tr><td><span>Altoparlanti (Realtek High Definition Audio)</span></td><td>48,000</td><td>8</td><td>32</td><td>10.00</td><td>10.00</td><td>10.00</td></tr></tbody></table></div><scroll-rail across></scroll-rail>`);

define('options-dialog', `
:host{position:absolute;left:567px;top:131px;width:985px;height:689px;display:grid;grid-template-rows:37px minmax(0,1fr) 40px;border:1px solid #555;background:#f0f0f0;box-shadow:0 2px 16px #0006;font-family:"Noto Sans","Open Sans",sans-serif;font-size:12px;line-height:16px;z-index:5}
header{display:flex;justify-content:space-between;align-items:center;background:#fff;padding:0 14px 0 9px;font-family:"Open Sans",sans-serif;font-size:14px}
button{font:inherit;color:#000;padding:0;width:86px;height:27px;border:1px solid #adadad;background:#e1e1e1}
header button,footer .cam{border:0;background:none;width:auto;height:auto;padding:0;display:grid}
.mid{display:grid;grid-template-columns:219px minmax(0,1fr);gap:4px;padding:0 1px 0 3px;min-height:0}
options-tree{margin:3px 0 1px}
.page{display:flex;flex-direction:column;background:#fff;border:1px solid #dcdcdc;border-top:0;padding:1px 2px 16px 1px;min-height:0}
h2{margin:0;height:32px;padding:0 8px;font-size:13px;line-height:30px;background:#f0f0f0;border:1px solid #a0a0a0;border-bottom-color:#505050;box-shadow:3px 2px 1px #bbb}
.in{display:flex;flex-direction:column;flex:1;padding:19px 10px 0 15px;min-height:0}
p{margin:0 0 16px}
.act{display:flex;align-items:center;margin:4px 0 20px 5px}
.act button{border:2px solid #0078d7}
a{color:#0066cc;margin-bottom:3px}
a:nth-of-type(1){margin-left:25px}a:nth-of-type(2){margin-left:auto}a:nth-of-type(3){margin-left:27px;margin-right:137px}
device-table{flex:1}
footer{display:flex;align-items:center;gap:9px;padding:0 6px 0 16px}
footer .cam{margin-right:auto;--size:18px}
`, `<header>Program Options, v3.0.26<button aria-label="Close"><svg width="13" height="13"><path d="M.5.5l12 12M12.500.5l-12 12" stroke="#000" stroke-width="1.200"/></svg></button></header>
<div class="mid"><options-tree></options-tree><div class="page"><h2>Available playback devices</h2><div class="in">
<p>This program uses Windows Audio Session API (WASAPI) for audio streaming. Use a Virtual Audio Cable to<br>send audio to 3rd-party programs.</p><p>This is the status of the available devices.</p>
<div class="act"><button>Refresh</button><a href="#text">View as text</a><a href="#vac">Virtual Audio Cable</a><a href="#vb">VB-Audio CABLE</a></div>
<device-table></device-table></div></div></div>
<footer><button class="cam" aria-label="Screenshot"><app-icon name="camera"></app-icon></button><button>OK</button><button>Annulla</button></footer>`);
document.querySelector('options-dialog').setAttribute('role', 'dialog');
</script>
</body>
</html>
